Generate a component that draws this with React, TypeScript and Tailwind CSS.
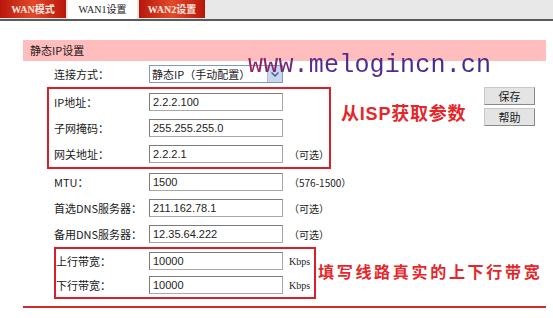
import React from "react";

const cjk = { fontFamily: '"Noto Sans CJK SC", "Noto Sans", sans-serif' };
const serifCjk = { fontFamily: '"Liberation Serif", "Noto Sans CJK SC", serif' };
const num = { fontFamily: '"Liberation Sans", "Noto Sans CJK SC", sans-serif' };

function Input({ value }: { value: string }) {
  return (
    <div
      className="w-[134px] h-[18px] shrink-0 bg-white border border-[#a8a8a8] border-t-[#7c7c7c] border-l-[#7c7c7c] pl-[3px] text-[11px] leading-[16px] text-[#222]"
      style={num}
    >
      {value}
    </div>
  );
}

function Label({ text, w }: { text: string; w: string }) {
  return (
    <div className={`${w} shrink-0 text-[11px] text-[#1a1a1a]`} style={cjk}>
      {text}
    </div>
  );
}

function Suffix({ text }: { text: string }) {
  return (
    <div className="ml-[6px] text-[10px] text-[#1a1a1a] whitespace-nowrap" style={cjk}>
      {text}
    </div>
  );
}

function Tab({ label, active }: { label: string; active?: boolean }) {
  return active ? (
    <div
      className="h-[19px] w-[69px] bg-white flex items-center justify-center text-[10px] text-[#222]"
      style={serifCjk}
    >
      {label}
    </div>
  ) : (
    <div
      className="h-[18px] w-[66px] bg-[linear-gradient(to_right,#b8160a,#e24a2a_50%,#b8160a)] flex items-center justify-center text-[10px] font-bold text-[#fde8e0]"
      style={serifCjk}
    >
      {label}
    </div>
  );
}

export default function App() {
  return (
    <div className="relative w-[553px] h-[318px] bg-white overflow-hidden">
      {/* Tab bar */}
      <div className="h-[21px] bg-[#e8e8e8] border-b-2 border-[#5a5a5a] flex items-start gap-[2px]">
        <Tab label="WAN模式" />
        <Tab label="WAN1设置" active />
        <Tab label="WAN2设置" />
      </div>

      <div className="pl-[23px] pr-[7px] pt-[19px]">
        {/* Section header */}
        <div
          className="h-[21px] bg-[#ffbdbd] pl-[7px] text-[11px] leading-[21px] text-[#1a1a1a]"
          style={cjk}
        >
          静态IP设置
        </div>

        <div className="flex">
          <div className="flex-1 flex flex-col">
            {/* connection type */}
            <div className="h-[26px] flex items-center pl-[31px]">
              <Label text="连接方式：" w="w-[95px]" />
              <div className="w-[134px] h-[18px] shrink-0 flex bg-white border border-[#7f9db9]">
                <div className="flex-1 pl-[2px] text-[11px] leading-[16px] text-[#1a1a1a]" style={cjk}>
                  静态IP（手动配置）
                </div>
                <div className="w-[15px] h-full bg-[#c8d6f2] border-l border-[#a8bce0] flex items-center justify-center">
                  <svg width="8" height="5" viewBox="0 0 8 5">
                    <path d="M0.5 0.5 L4 4 L7.5 0.5" fill="none" stroke="#4d6185" strokeWidth="1.5" />
                  </svg>
                </div>
              </div>
            </div>

            {/* Box 1 */}
            <div className="ml-[24px] w-[284px] border-2 border-[#d8202a] pl-[5px]">
              <div className="h-[26px] flex items-center">
                <Label text="IP地址：" w="w-[95px]" />
                <Input value="2.2.2.100" />
              </div>
              <div className="h-[26px] flex items-center">
                <Label text="子网掩码：" w="w-[95px]" />
                <Input value="255.255.255.0" />
              </div>
              <div className="h-[26px] flex items-center">
                <Label text="网关地址：" w="w-[95px]" />
                <Input value="2.2.2.1" />
                <Suffix text="（可选）" />
              </div>
            </div>

            <div className="h-[26px] flex items-center pl-[31px]">
              <Label text="MTU：" w="w-[95px]" />
              <Input value="1500" />
              <Suffix text="（576-1500）" />
            </div>
            <div className="h-[26px] flex items-center pl-[31px]">
              <Label text="首选DNS服务器：" w="w-[95px]" />
              <Input value="211.162.78.1" />
              <Suffix text="（可选）" />
            </div>
            <div className="h-[26px] flex items-center pl-[31px]">
              <Label text="备用DNS服务器：" w="w-[95px]" />
              <Input value="12.35.64.222" />
              <Suffix text="（可选）" />
            </div>

            {/* Box 2 */}
            <div className="ml-[31px] w-[262px] border-2 border-[#d8202a]">
              <div className="h-[24px] flex items-center">
                <Label text="上行带宽：" w="w-[93px]" />
                <Input value="10000" />
                <div className="ml-[6px] text-[10px] text-[#222]" style={serifCjk}>Kbps</div>
              </div>
              <div className="h-[24px] flex items-center">
                <Label text="下行带宽：" w="w-[93px]" />
                <Input value="10000" />
                <div className="ml-[6px] text-[10px] text-[#222]" style={serifCjk}>Kbps</div>
              </div>
            </div>
          </div>

          {/* Buttons */}
          <div className="flex flex-col items-end pr-[11px] pt-[26px] gap-[3px]">
            <button
              className="w-[51px] h-[18px] bg-[#e4e4e4] border border-[#8a8a8a] border-t-[#c8c8c8] border-l-[#c8c8c8] text-[11px] leading-[16px] text-[#1a1a1a]"
              style={cjk}
            >
              保存
            </button>
            <button
              className="w-[51px] h-[18px] bg-[#e4e4e4] border border-[#8a8a8a] border-t-[#c8c8c8] border-l-[#c8c8c8] text-[11px] leading-[16px] text-[#1a1a1a]"
              style={cjk}
            >
              帮助
            </button>
          </div>
        </div>

        <div className="mt-[7px] h-[2px] bg-[#d42a2a]" />
      </div>

      {/* Watermark */}
      <div
        className="absolute left-[248px] top-[53px] text-[25px] leading-[25px] tracking-[0.2px] whitespace-nowrap bg-[linear-gradient(to_right,#a0205a,#5a2a8c_25%,#3e2c92)] bg-clip-text text-transparent"
        style={{ fontFamily: '"Liberation Mono", monospace' }}
      >
        www.melogincn.cn
      </div>

      {/* Annotations */}
      <div
        className="absolute left-[341px] top-[104px] text-[18px] leading-[20px] font-bold tracking-[0.8px] text-[#e5262a] whitespace-nowrap"
        style={{ fontFamily: '"Liberation Sans", "Noto Sans CJK SC", sans-serif' }}
      >
        从ISP获取参数
      </div>
      <div
        className="absolute left-[318px] top-[261px] text-[16px] leading-[20px] font-bold tracking-[2.7px] text-[#e5262a] whitespace-nowrap"
        style={cjk}
      >
        填写线路真实的上下行带宽
      </div>
    </div>
  );
}
